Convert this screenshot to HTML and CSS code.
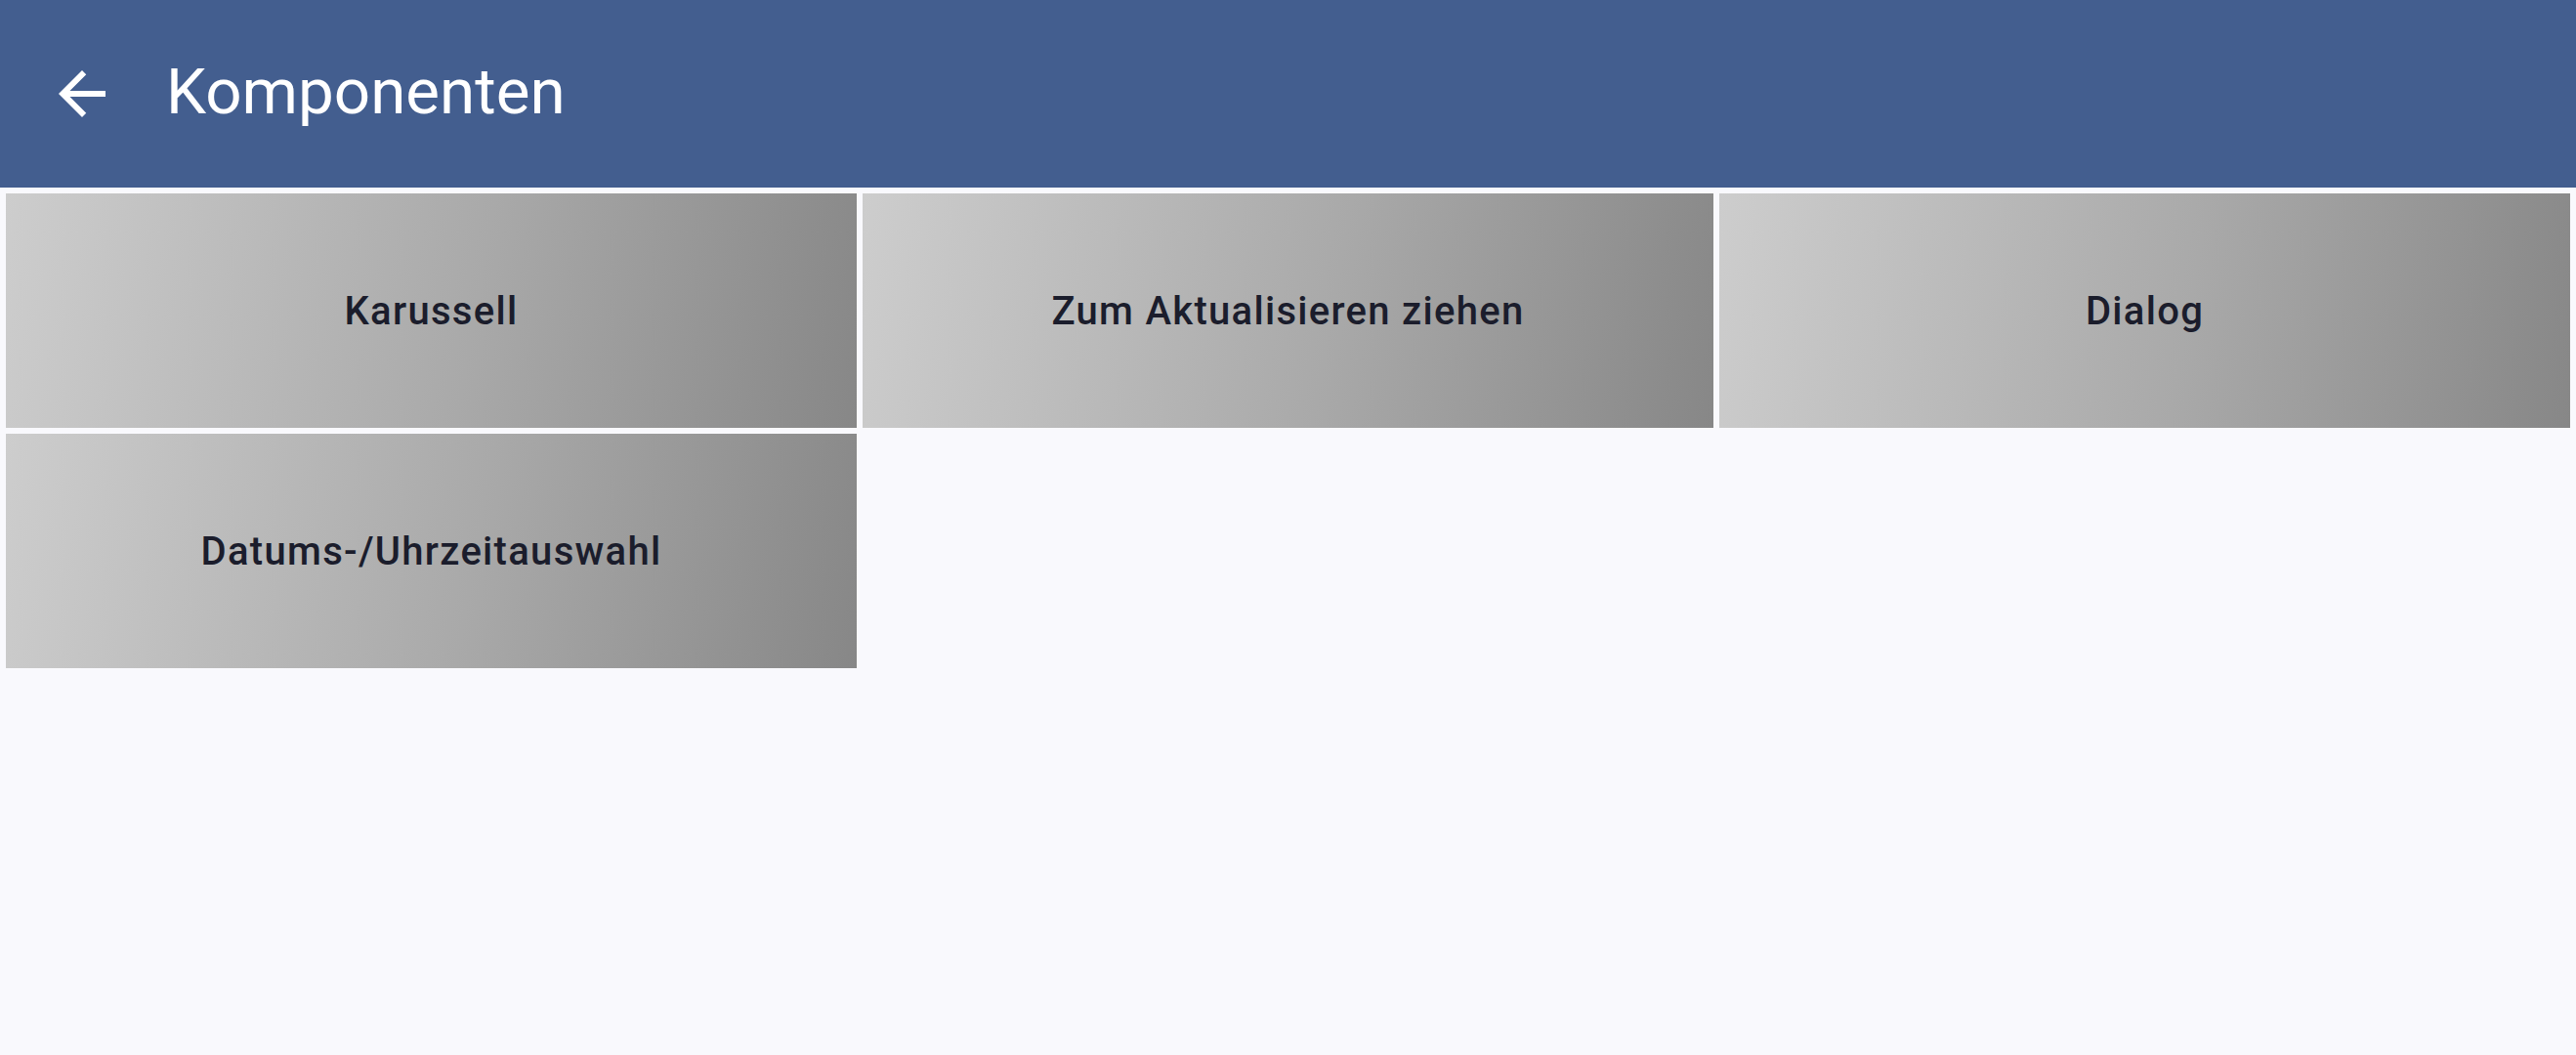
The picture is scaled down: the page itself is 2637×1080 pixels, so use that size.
FILE: index.html
```html
<!DOCTYPE html>
<html lang="de">
<head>
<meta charset="utf-8">
<title>Komponenten</title>
<link rel="stylesheet" href="styles.css">
</head>
<body>
<header class="appbar">
  <button class="back" aria-label="Zurück">
    <svg viewBox="0 0 24 24" width="72" height="72"><path fill="#ffffff" d="M20 11H7.83l5.59-5.59L12 4l-8 8 8 8 1.41-1.41L7.83 13H20v-2z"/></svg>
  </button>
  <h1 class="title">Komponenten</h1>
</header>
<main class="grid">
  <div class="tile">Karussell</div>
  <div class="tile">Zum Aktualisieren ziehen</div>
  <div class="tile">Dialog</div>
  <div class="tile">Datums-/Uhrzeitauswahl</div>
</main>
</body>
</html>
```
FILE: styles.css
```css
html, body {
  margin: 0;
  padding: 0;
  height: 100%;
}
body {
  background: #f9f9fd;
  font-family: Roboto, "Noto Sans", sans-serif;
}
.appbar {
  height: 192px;
  background: #435e8f;
  display: flex;
  align-items: center;
  box-sizing: border-box;
  padding-left: 48px;
}
.back {
  width: 72px;
  height: 72px;
  padding: 0;
  border: 0;
  background: transparent;
  display: flex;
}
.title {
  margin: 0 0 0 50px;
  color: #ffffff;
  font-weight: 400;
  font-size: 65.5px;
  line-height: 1;
  position: relative;
  top: -2px;
}
.grid {
  display: grid;
  grid-template-columns: repeat(3, 1fr);
  grid-auto-rows: 240px;
  gap: 6px;
  padding: 6px;
}
.tile {
  background: linear-gradient(100deg, #cdcdcd 0%, #a9a9a9 55%, #878787 100%);
  display: flex;
  align-items: center;
  justify-content: center;
  color: #1b1d2c;
  font-weight: 500;
  font-size: 40px;
  letter-spacing: 1.3px;
}
```
